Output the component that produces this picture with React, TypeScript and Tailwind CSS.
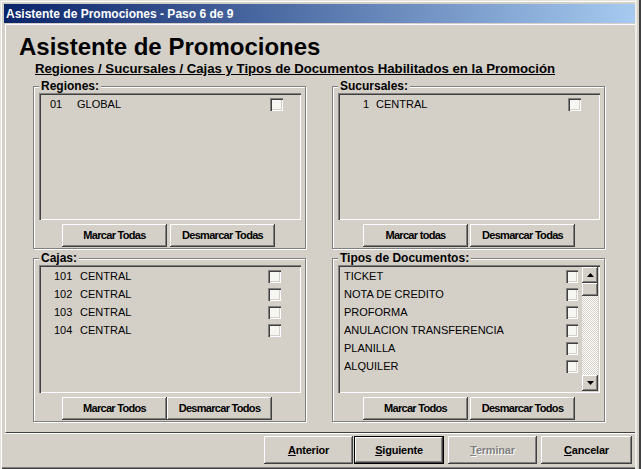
// Asistente de Promociones — paso 6 de 9 (Win2000 style wizard)

const raised =
  'shadow-[inset_-1px_-1px_0_#404040,inset_1px_1px_0_#ffffff,inset_-2px_-2px_0_#808080,inset_2px_2px_0_#d4d0c8]';
const sunken =
  'shadow-[inset_1px_1px_0_#808080,inset_2px_2px_0_#404040,inset_-1px_-1px_0_#ffffff,inset_-2px_-2px_0_#d4d0c8]';

const regiones = [{ code: '01', name: 'GLOBAL' }];
const sucursales = [{ code: '1', name: 'CENTRAL' }];
const cajas = [
  { code: '101', name: 'CENTRAL' },
  { code: '102', name: 'CENTRAL' },
  { code: '103', name: 'CENTRAL' },
  { code: '104', name: 'CENTRAL' },
];
const tipos = ['TICKET', 'NOTA DE CREDITO', 'PROFORMA', 'ANULACION TRANSFERENCIA', 'PLANILLA', 'ALQUILER'];

export default function App() {
  return (
    <div className="flex h-[469px] w-[641px] overflow-hidden bg-[#d4d0c8] font-['Liberation_Sans',Arial,sans-serif] text-black">
      {/* Ventana */}
      <div className="flex h-full w-[635px] flex-col pl-[4px] pt-[4px] shadow-[inset_1px_1px_0_#e4e2dc,inset_2px_2px_0_#ffffff,inset_0_-1px_0_#404040,inset_0_-2px_0_#808080]">
        <div className="flex h-[19px] w-[632px] items-center bg-[linear-gradient(90deg,#0a246a,#a6caf0)] pl-[2px] text-[12px] font-bold text-white">
          Asistente de Promociones - Paso 6 de 9
        </div>

        <div className="ml-[1px] mt-[1px] flex h-[409px] w-[631px] flex-col border-b border-l border-t border-b-[#404040] border-l-white border-t-white">
          <h1 className="ml-[13px] mt-[8px] text-[24px] font-bold leading-[28px]">Asistente de Promociones</h1>
          <div className="ml-[29px] mt-[1px] text-[13.2px] font-bold leading-[14px] underline">
            Regiones / Sucursales / Cajas y Tipos de Documentos Habilitados en la Promoción
          </div>

          <div className="ml-[27px] mt-[3px] grid w-[572px] grid-cols-[273px_273px] gap-x-[26px] gap-y-[2px]">
            <Group label="Regiones:">
              <List h={127}>
                {regiones.map((r) => (
                  <Row key={r.code} pl={9} pr={16} codeW={27} code={r.code} name={r.name} />
                ))}
              </List>
              <Buttons a="Marcar Todas" b="Desmarcar Todas" ml={23} gap={3} />
            </Group>

            <Group label="Sucursales:">
              <List h={127}>
                {sucursales.map((r) => (
                  <Row key={r.code} pl={23} pr={17} codeW={13} code={r.code} name={r.name} />
                ))}
              </List>
              <Buttons a="Marcar todas" b="Desmarcar Todas" ml={25} gap={2} />
            </Group>

            <Group label="Cajas:">
              <List h={128}>
                {cajas.map((r) => (
                  <Row key={r.code} pl={13} pr={18} codeW={26} code={r.code} name={r.name} />
                ))}
              </List>
              <Buttons a="Marcar Todos" b="Desmarcar Todos" ml={23} gap={0} />
            </Group>

            <Group label="Tipos de Documentos:">
              <List h={128}>
                <div className="flex h-full">
                  <div className="flex-1">
                    {tipos.map((t) => (
                      <div key={t} className="flex h-[18px] items-center pl-[4px] pr-[4px] text-[11px]">
                        <span>{t}</span>
                        <div className={`ml-auto h-[13px] w-[12px] bg-[#f6f6f2] ${sunken}`} />
                      </div>
                    ))}
                  </div>
                  <ScrollBar />
                </div>
              </List>
              <Buttons a="Marcar Todos" b="Desmarcar Todos" ml={25} gap={2} />
            </Group>
          </div>
        </div>
        <div className="ml-[1px] h-[1px] w-[631px] bg-white" />

        <div className="ml-[260px] mt-[2px] flex items-start">
          <WinButton w={89} u="A" rest="nterior" />
          <div className="ml-[1px] border border-black">
            <WinButton w={88} u="S" rest="iguiente" h={26} />
          </div>
          <WinButton w={89} u="T" rest="erminar" disabled className="ml-[4px]" />
          <WinButton w={91} u="C" rest="ancelar" className="ml-[4px]" />
        </div>
      </div>

      {/* borde de la ventana de atrás */}
      <div className="flex h-full w-[6px]">
        <div className="h-full w-[2px] bg-[#eeece6]" />
        <div className="h-full w-[2px]" />
        <div className="h-full w-[2px] bg-[#404040]" />
      </div>
    </div>
  );
}

function Group({ label, children }: { label: string; children: React.ReactNode }) {
  return (
    <fieldset className="border border-[#808080] pb-[1px] pl-[5px] pr-[4px] shadow-[inset_1px_1px_0_#ffffff,1px_1px_0_#ffffff]">
      <legend className="bg-[#d4d0c8] px-[2px] text-[12px] font-bold leading-[14px]">{label}</legend>
      {children}
    </fieldset>
  );
}

function List({ h, children }: { h: number; children: React.ReactNode }) {
  return (
    <div className={`p-[2px] ${sunken}`} style={{ height: h }}>
      {children}
    </div>
  );
}

function Row({
  code,
  name,
  pl,
  pr,
  codeW,
}: {
  code: string;
  name: string;
  pl: number;
  pr: number;
  codeW: number;
}) {
  return (
    <div className="flex h-[18px] items-center text-[11px]" style={{ paddingLeft: pl, paddingRight: pr }}>
      <span style={{ width: codeW }}>{code}</span>
      <span>{name}</span>
      <div className={`ml-auto h-[13px] w-[13px] bg-[#f6f6f2] ${sunken}`} />
    </div>
  );
}

function Buttons({ a, b, ml, gap }: { a: string; b: string; ml: number; gap: number }) {
  return (
    <div className="mt-[4px] flex text-[11px] font-bold tracking-[-0.7px]" style={{ marginLeft: ml, gap }}>
      <div className={`flex h-[23px] w-[105px] items-center justify-center ${raised}`}>{a}</div>
      <div className={`flex h-[23px] w-[105px] items-center justify-center ${raised}`}>{b}</div>
    </div>
  );
}

function ScrollBar() {
  return (
    <div className="flex h-full w-[16px] flex-col bg-[repeating-conic-gradient(#d4d0c8_0_25%,#ffffff_0_50%)] bg-[length:2px_2px]">
      <div className={`flex h-[16px] items-center justify-center bg-[#d4d0c8] ${raised}`}>
        <svg width="7" height="4" viewBox="0 0 7 4">
          <polygon points="3.5,0 7,4 0,4" fill="#000" />
        </svg>
      </div>
      <div className={`h-[13px] bg-[#d4d0c8] ${raised}`} />
      <div className="flex-1" />
      <div className={`flex h-[16px] items-center justify-center bg-[#d4d0c8] ${raised}`}>
        <svg width="7" height="4" viewBox="0 0 7 4">
          <polygon points="0,0 7,0 3.5,4" fill="#000" />
        </svg>
      </div>
    </div>
  );
}

function WinButton({
  w,
  u,
  rest,
  h = 28,
  disabled,
  className = '',
}: {
  w: number;
  u: string;
  rest: string;
  h?: number;
  disabled?: boolean;
  className?: string;
}) {
  return (
    <div
      className={`flex items-center justify-center text-[11px] font-bold tracking-[-0.2px] ${raised} ${
        disabled ? 'text-[#808080] [text-shadow:1px_1px_0_#ffffff]' : ''
      } ${className}`}
      style={{ width: w, height: h }}
    >
      <span>
        <span className="underline">{u}</span>
        {rest}
      </span>
    </div>
  );
}
